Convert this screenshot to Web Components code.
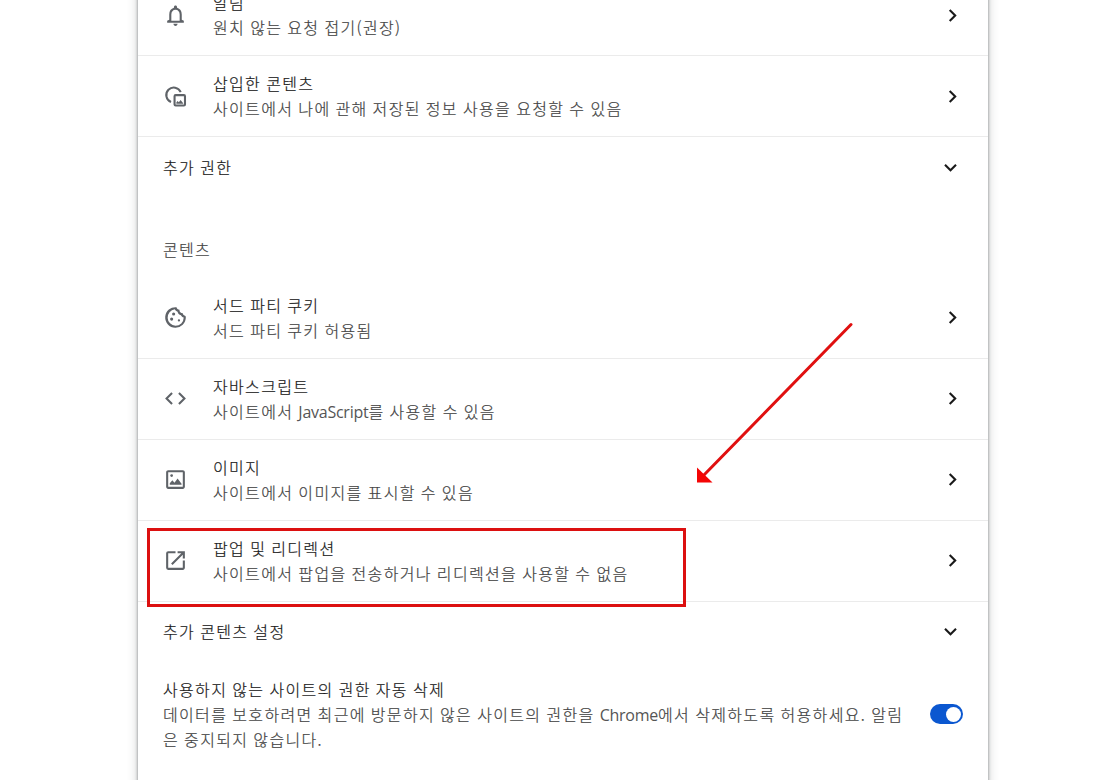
<!DOCTYPE html>
<html lang="ko">
<head>
<meta charset="utf-8">
<title>사이트 설정</title>
<style>
  body {
    margin: 0;
    background: #fff;
    overflow: hidden;
  }
</style>
</head>
<body>
<settings-page>
  <link-row icon="bell" label="알림">원치 않는 요청 접기(권장)</link-row>
  <link-row icon="embed" label="삽입한 콘텐츠">사이트에서 나에 관해 저장된 정보 사용을 요청할 수 있음</link-row>
  <expand-row>추가 권한</expand-row>
  <section-title>콘텐츠</section-title>
  <link-row icon="cookie" label="서드 파티 쿠키">서드 파티 쿠키 허용됨</link-row>
  <link-row icon="code" label="자바스크립트">사이트에서 <latin-text>JavaScript</latin-text>를 사용할 수 있음</link-row>
  <link-row icon="image" label="이미지">사이트에서 이미지를 표시할 수 있음</link-row>
  <link-row icon="popup" label="팝업 및 리디렉션">사이트에서 팝업을 전송하거나 리디렉션을 사용할 수 없음</link-row>
  <expand-row>추가 콘텐츠 설정</expand-row>
  <toggle-row label="사용하지 않는 사이트의 권한 자동 삭제">데이터를 보호하려면 최근에 방문하지 않은 사이트의 권한을 <latin-text>Chrome</latin-text>에서 삭제하도록 허용하세요. 알림<br>은 중지되지 않습니다.</toggle-row>
</settings-page>
<mark-overlay></mark-overlay>

<script>
const icons = {
  bell: '<path d="M12 22c1.1 0 2-.9 2-2h-4c0 1.1.9 2 2 2zm6-6v-5c0-3.07-1.63-5.64-4.5-6.32V4c0-.83-.67-1.5-1.5-1.5s-1.5.67-1.5 1.5v.68C7.64 5.36 6 7.92 6 11v5l-2 1v2h16v-2l-2-1zm-2 1H8v-6c0-2.48 1.51-4.5 4-4.5s4 2.02 4 4.5v6z"/>',
  embed: '<path fill="none" stroke="currentColor" stroke-width="2" d="M7.7 17.3A7.2 7.2 0 1 1 17 7.8"/><rect x="11.1" y="10.7" width="10" height="10" rx="1" fill="none" stroke="currentColor" stroke-width="2"/><path d="M12.8 19v-1.2l1.2-1.6 1.2 1.4 1.7-2.3 2.5 3.2v.5z"/>',
  cookie: '<path d="M21.6 10.5c-1.4-.1-2.5-1.1-2.6-2.5-1.9 0-3.4-1.5-3.2-3.4-1.5-.1-2.6-1.1-2.8-2.5A9.9 9.9 0 1 0 21.9 11.8c0-.5-.1-.9-.3-1.3zM12 20a8 8 0 0 1-.7-15.9c.5 1.2 1.5 2 2.7 2.4.3 1.6 1.5 2.9 3.2 3.3.6 1.1 1.5 1.9 2.7 2.3A8 8 0 0 1 12 20z"/><circle cx="10.2" cy="8.6" r="1.5"/><circle cx="8.3" cy="13.5" r="1.5"/><circle cx="15.3" cy="14.8" r="1.1"/>',
  code: '<path d="M9.4 16.6 4.8 12l4.6-4.6L8 6l-6 6 6 6 1.4-1.4zm5.2 0 4.6-4.6-4.6-4.6L16 6l6 6-6 6-1.4-1.4z"/>',
  image: '<path d="M19 5v14H5V5h14m0-2H5c-1.1 0-2 .9-2 2v14c0 1.1.9 2 2 2h14c1.1 0 2-.9 2-2V5c0-1.1-.9-2-2-2z"/><path d="M6.5 17v-1.5L9 12.8l2 2.4 3-4.2 3.8 5V17z"/><circle cx="8.3" cy="8.2" r="1.3"/>',
  popup: '<path d="M19 19H5V5h7V3H5a2 2 0 0 0-2 2v14a2 2 0 0 0 2 2h14c1.1 0 2-.9 2-2v-7h-2v7zM14 3v2h3.59l-9.83 9.83 1.41 1.41L19 6.41V10h2V3h-7z"/>',
  next: '<path d="M10 6 8.59 7.41 13.17 12l-4.58 4.59L10 18l6-6z"/>',
  more: '<path d="m16.59 8.59-4.59 4.58-4.59-4.58L6 10l6 6 6-6z"/>'
};

class BaseElement extends HTMLElement {
  constructor() {
    super();
    this.attachShadow({ mode: 'open' });
  }

  connectedCallback() {
    this.shadowRoot.innerHTML = this.render();
  }

  get label() {
    return this.getAttribute('label');
  }
}

customElements.define('app-icon', class extends BaseElement {
  render() {
    return `
      <style>
        :host { display: block; flex: none; width: 25px; height: 25px; }
        svg { display: block; width: 100%; height: 100%; }
      </style>
      <svg viewBox="0 0 24 24" fill="currentColor">${icons[this.getAttribute('name')]}</svg>
    `;
  }
});

customElements.define('latin-text', class extends BaseElement {
  render() {
    // no whitespace around the slot, it would show up in the sentence
    return `<style>
        :host {
          color: #555;
          font-family: "Open Sans", "Noto Sans", sans-serif;
          font-weight: 400;
          letter-spacing: -.25px;
          line-height: 1;
          -webkit-text-stroke: 0;
        }
      </style><slot></slot>`;
  }
});

customElements.define('settings-page', class extends BaseElement {
  render() {
    return `
      <style>
        :host {
          display: block;
          height: 780px;
          overflow: hidden;
          color: #1a1a1a;
          --secondary: #444;
          --line: #ebebeb;
          font: 300 16px/25px "Noto Sans CJK KR", sans-serif;
          letter-spacing: 1.34px;
          word-spacing: -.8px;
          -webkit-text-stroke: .22px;
        }
        main {
          box-sizing: border-box;
          width: 850px;
          height: 840px;
          margin: -25px 0 0 138px;
          background: #fff;
          box-shadow: 0 0 3px rgba(60, 64, 67, .6), 0 2px 8px 3px rgba(60, 64, 67, .15);
        }
      </style>
      <main><slot></slot></main>
    `;
  }
});

customElements.define('link-row', class extends BaseElement {
  render() {
    return `
      <style>
        :host {
          box-sizing: border-box;
          display: flex;
          align-items: center;
          height: 81px;
          padding: 0 23px 0 25px;
          border-bottom: 1px solid var(--line);
        }
        .icon { color: #5f6368; margin-right: 25px; }
        .text { flex: 1; white-space: nowrap; }
        .sub { color: var(--secondary); }
      </style>
      <app-icon class="icon" name="${this.getAttribute('icon')}"></app-icon>
      <div class="text">
        <div>${this.label}</div>
        <div class="sub"><slot></slot></div>
      </div>
      <app-icon name="next"></app-icon>
    `;
  }
});

customElements.define('expand-row', class extends BaseElement {
  render() {
    return `
      <style>
        :host {
          display: flex;
          align-items: center;
          justify-content: space-between;
          height: 60.6px;
          padding: 0 25px;
        }
      </style>
      <span><slot></slot></span>
      <app-icon name="more"></app-icon>
    `;
  }
});

customElements.define('section-title', class extends BaseElement {
  render() {
    return `
      <style>
        :host {
          display: flex;
          align-items: center;
          height: 56px;
          margin-top: 24px;
          padding: 0 25px;
          color: var(--secondary);
        }
      </style>
      <slot></slot>
    `;
  }
});

customElements.define('toggle-row', class extends BaseElement {
  render() {
    return `
      <style>
        :host {
          display: flex;
          align-items: center;
          justify-content: space-between;
          padding: 14.5px 25px;
        }
        .text { white-space: nowrap; }
        .sub { color: var(--secondary); }
        .switch {
          box-sizing: border-box;
          display: flex;
          justify-content: flex-end;
          width: 33px;
          height: 20px;
          padding: 2.5px;
          border-radius: 10px;
          background: #0b57d0;
        }
        .knob { width: 15px; height: 15px; border-radius: 50%; background: #fff; }
      </style>
      <div class="text">
        <div>${this.label}</div>
        <div class="sub"><slot></slot></div>
      </div>
      <div class="switch"><div class="knob"></div></div>
    `;
  }
});

customElements.define('mark-overlay', class extends BaseElement {
  render() {
    return `
      <style>
        :host { position: absolute; left: 0; top: 0; pointer-events: none; }
        svg { display: block; }
      </style>
      <svg width="1116" height="780">
        <rect x="148.5" y="529.5" width="536" height="76" fill="none" stroke="#dc1010" stroke-width="3"/>
        <path d="M851 324.5 703 476" fill="none" stroke="#e01010" stroke-width="3" stroke-linecap="round"/>
        <path d="M697 467.5 712.5 482.5H697z" fill="#f40505"/>
      </svg>
    `;
  }
});
</script>
</body>
</html>
